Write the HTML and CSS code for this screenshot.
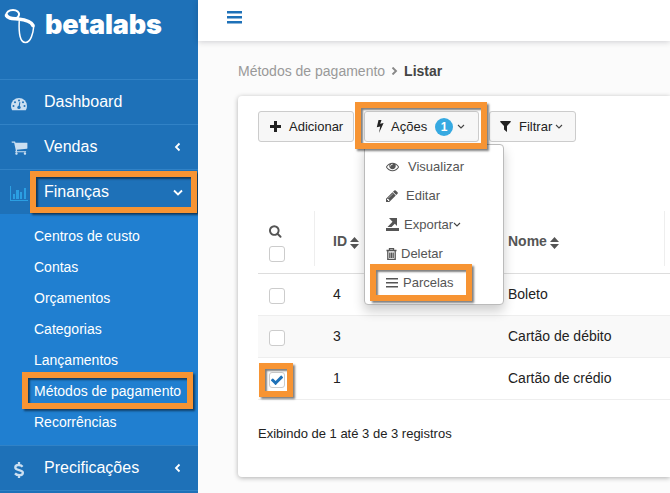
FILE: index.html
```html
<!DOCTYPE html>
<html lang="pt-BR">

<head>
    <meta charset="UTF-8">
    <meta name="viewport" content="width=device-width, initial-scale=1.0">
    <title>Métodos de pagamento</title>
    <link rel="stylesheet" href="styles.css">
</head>

<body>
    <aside class="sidebar">
        <div class="logo">
            <svg class="logo-icon" width="32" height="36" viewBox="0 0 32 36" fill="none" stroke="#fff" stroke-linecap="round">
                <path d="M2.200 8C2 4 5 2 9 2c4 0 6.500 2.500 6 5-.3 1.600-1.500 2.800-3 3.500" stroke-width="2" />
                <path d="M2.500 7.500C4 11 9 10.500 14 11c7 .8 13.500 2.500 15 6.500" stroke-width="3.600" />
                <path d="M29.800 18c-.6 7-3 16.500-8.300 16.500-5.500 0-6.800-9-6.300-21" stroke-width="1.500" />
            </svg>
            <span class="logo-text">betalabs</span>
        </div>

        <ul class="menu">
            <li class="menu-item">
                <svg class="menu-icon" width="18" height="18" viewBox="0 0 18 18">
                    <path fill="currentColor" d="M1 11a8 8 0 0 1 16 0c0 1.600-.4 3-1.200 4.200H2.200C1.400 14 1 12.600 1 11z" />
                    <g fill="#1e71b8">
                        <circle cx="3.500" cy="11" r="1" />
                        <circle cx="5" cy="7.300" r="1" />
                        <circle cx="9" cy="5.500" r="1" />
                        <circle cx="13" cy="7.300" r="1" />
                        <circle cx="14.500" cy="11" r="1" />
                        <circle cx="9" cy="12.400" r="1.700" />
                        <path d="M8.400 12l1-5 1 .3-.8 5z" />
                    </g>
                </svg>
                <span>Dashboard</span>
            </li>
            <li class="menu-item">
                <svg class="menu-icon cart" width="17" height="17" viewBox="0 0 1792 1792" fill="currentColor">
                    <path d="M704 1536q0 52-38 90t-90 38-90-38-38-90 38-90 90-38 90 38 38 90zm896 0q0 52-38 90t-90 38-90-38-38-90 38-90 90-38 90 38 38 90zm128-1088v512q0 24-16.500 42.500t-40.500 21.500l-1044 122q13 60 13 70 0 16-24 64h920q26 0 45 19t19 45-19 45-45 19h-1024q-26 0-45-19t-19-45q0-11 8-31.500t16-36 21.500-40 15.500-29.500l-177-823h-204q-26 0-45-19t-19-45 19-45 45-19h256q16 0 28.500 6.500t19.500 15.500 13 24.500 8 26 5.500 29.500 4.500 26h1201q26 0 45 19t19 45z" />
                </svg>
                <span>Vendas</span>
                <svg class="arrow" width="10" height="10" viewBox="0 0 10 10"><path d="M6.500 1.500L3 5l3.500 3.500" /></svg>
            </li>
            <li class="menu-item active">
                <svg class="menu-icon chart" width="19" height="16" viewBox="0 0 19 16" fill="currentColor">
                    <path d="M0 0h1v14h17v1H0zM3 8h2v5H3zM6 4h3v9H6zM10 6h2v7h-2zM14 2h2v11h-2z" />
                </svg>
                <span>Finanças</span>
                <svg class="arrow" width="10" height="10" viewBox="0 0 10 10"><path d="M1 3.500l4 4 4-4" /></svg>
                <div class="mark mark-financas"></div>
            </li>
        </ul>

        <ul class="submenu">
            <li>Centros de custo</li>
            <li>Contas</li>
            <li>Orçamentos</li>
            <li>Categorias</li>
            <li>Lançamentos</li>
            <li>Métodos de pagamento<div class="mark mark-metodos"></div></li>
            <li>Recorrências</li>
        </ul>

        <ul class="menu">
            <li class="menu-item">
                <svg class="menu-icon" width="18" height="18" viewBox="0 0 18 18" fill="none" stroke="currentColor" stroke-width="2.300">
                    <path d="M12.600 5.700C11.500 4.500 10 4 8.600 4 6.700 4 5.300 5 5.300 6.500c0 3.400 7.600 1.700 7.600 5.200 0 1.600-1.500 2.500-3.700 2.500-1.700 0-3.100-.6-4.200-1.800M9 1v3M9 14v3" />
                </svg>
                <span>Precificações</span>
                <svg class="arrow" width="10" height="10" viewBox="0 0 10 10"><path d="M6.500 1.500L3 5l3.500 3.500" /></svg>
            </li>
            <li class="menu-item"></li>
        </ul>
    </aside>

    <div class="content">
        <header class="topbar">
            <svg width="15" height="13" viewBox="0 0 15 13" fill="#1e71b8">
                <path d="M0 0h15v2.500H0zM0 5h15v2.500H0zM0 10h15v2.500H0z" />
            </svg>
        </header>

        <div class="breadcrumb">
            <span>Métodos de pagamento</span>
            <svg width="7" height="8" viewBox="0 0 7 8" fill="none" stroke="#888" stroke-width="1.900"><path d="M1.500 .5L5 4 1.500 7.500" /></svg>
            <b>Listar</b>
        </div>

        <main class="card">
            <div class="toolbar">
                <button class="btn btn-add">
                    <svg width="11" height="11" viewBox="0 0 11 11" fill="#222"><path d="M4 0h3v4h4v3H7v4H4V7H0V4h4z" /></svg>
                    <span>Adicionar</span>
                </button>

                <div class="dropdown">
                    <button class="btn btn-actions">
                        <svg width="8" height="13" viewBox="0 0 8 13" fill="#222"><path d="M2.500 0h3L4.200 3.700 7.600 3 3 13l1.200-6.500L.8 7.300z" /></svg>
                        <span>Ações</span>
                        <span class="badge">1</span>
                        <svg class="caret" width="8" height="6" viewBox="0 0 8 6"><path d="M1 1l3 3 3-3" /></svg>
                    </button>
                    <div class="mark mark-acoes"></div>

                    <ul class="dropdown-menu">
                        <li class="view">
                            <svg width="13" height="13" viewBox="0 0 1792 1792" fill="currentColor"><path d="M1664 960q-152-236-381-353 61 104 61 225 0 185-131.500 316.500t-316.500 131.500-316.500-131.500-131.500-316.500q0-121 61-225-229 117-381 353 133 205 333.500 326.500t434.500 121.500 434.500-121.500 333.500-326.500zm-720-384q0-20-14-34t-34-14q-125 0-214.500 89.500t-89.500 214.500q0 20 14 34t34 14 34-14 14-34q0-86 61-147t147-61q20 0 34-14t14-34zm848 384q0 34-20 69-140 230-376.500 368.500t-499.500 138.500-499.500-139-376.500-368q-20-35-20-69t20-69q140-229 376.500-368t499.500-139 499.500 139 376.500 368q20 35 20 69z" /></svg>
                            <span>Visualizar</span>
                        </li>
                        <li class="edit">
                            <svg width="12" height="12" viewBox="128 128 1536 1536" fill="currentColor"><path d="M491 1536l91-91-235-235-91 91v107h128v128h107zm523-928q0-22-22-22-10 0-17 7l-542 542q-7 7-7 17 0 22 22 22 10 0 17-7l542-542q7-7 7-17zm-54-192l416 416-832 832h-416v-416zm683 96q0 53-37 90l-166 166-416-416 166-165q36-38 90-38 53 0 91 38l235 234q37 39 37 91z" /></svg>
                            <span>Editar</span>
                        </li>
                        <li class="export">
                            <svg width="13" height="13" viewBox="0 0 13 13" fill="currentColor"><path d="M0 10h13v3H0zM3 0h8v8L8.800 5.800 5.500 9h-4l5-5.200z" /></svg>
                            <span>Exportar</span>
                            <svg class="caret" width="8" height="6" viewBox="0 0 8 6"><path d="M1 1l3 3 3-3" /></svg>
                        </li>
                        <li class="delete">
                            <svg width="11" height="12" viewBox="0 0 11 12" fill="none" stroke="currentColor"><path d="M.5 2.500h10M3.500 2V.6h4V2M1.800 3v8.400h7.400V3M3.800 4.500V10M5.500 4.500V10M7.200 4.500V10" stroke-width="1.300" /></svg>
                            <span>Deletar</span>
                        </li>
                        <li class="installments">
                            <svg width="12" height="11" viewBox="0 0 12 11" fill="currentColor"><path d="M0 1h12v1.500H0zM0 5h12v1.500H0zM0 9h12v1.500H0z" /></svg>
                            <span>Parcelas</span>
                            <div class="mark mark-parcelas"></div>
                        </li>
                    </ul>
                </div>

                <button class="btn btn-filter">
                    <svg width="11" height="11" viewBox="0 0 11 11" fill="#222"><path d="M.3 0h10.400v1L7 5v6L4 8.500V5L.3 1z" /></svg>
                    <span>Filtrar</span>
                    <svg class="caret" width="8" height="6" viewBox="0 0 8 6"><path d="M1 1l3 3 3-3" /></svg>
                </button>
            </div>

            <div class="table">
                <div class="row head">
                    <div class="cell select">
                        <svg width="13" height="13" viewBox="64 128 1728 1664" fill="currentColor"><path d="M1216 832q0-185-131.500-316.500t-316.500-131.500-316.500 131.500-131.500 316.500 131.500 316.500 316.500 131.500 316.500-131.500 131.500-316.500zm512 832q0 52-38 90t-90 38q-54 0-90-38l-343-342q-179 124-399 124-143 0-273.500-55.500t-225-150-150-225-55.500-273.500 55.500-273.500 150-225 225-150 273.500-55.500 273.500 55.500 225 150 150 225 55.500 273.500q0 220-124 399l343 343q37 37 37 90z" /></svg>
                        <span class="checkbox"></span>
                    </div>
                    <div class="cell">
                        <span>ID</span>
                        <svg class="sort" width="9" height="12" viewBox="0 0 9 12"><path d="M0 5l4.500-5L9 5zM0 7h9l-4.500 5z" /></svg>
                    </div>
                    <div class="cell">
                        <span>Nome</span>
                        <svg class="sort" width="9" height="12" viewBox="0 0 9 12"><path d="M0 5l4.500-5L9 5zM0 7h9l-4.500 5z" /></svg>
                    </div>
                </div>
                <div class="row">
                    <div class="cell select"><span class="checkbox"></span></div>
                    <div class="cell">4</div>
                    <div class="cell">Boleto</div>
                </div>
                <div class="row odd">
                    <div class="cell select"><span class="checkbox"></span></div>
                    <div class="cell">3</div>
                    <div class="cell">Cartão de débito</div>
                </div>
                <div class="row">
                    <div class="cell select">
                        <span class="checkbox">
                            <svg width="14" height="14" viewBox="0 0 1792 1792" fill="#1e71b8"><path d="M1671 566q0 40-28 68l-724 724-136 136q-28 28-68 28t-68-28l-136-136-362-362q-28-28-28-68t28-68l136-136q28-28 68-28t68 28l294 295 656-657q28-28 68-28t68 28l136 136q28 28 28 68z" /></svg>
                        </span>
                        <div class="mark mark-check"></div>
                    </div>
                    <div class="cell">1</div>
                    <div class="cell">Cartão de crédio</div>
                </div>
            </div>

            <p class="info">Exibindo de 1 até 3 de 3 registros</p>
        </main>
    </div>
</body>

</html>
```
FILE: styles.css
```css
* {
    box-sizing: border-box;
}

body {
    margin: 0;
    height: 493px;
    display: flex;
    overflow: hidden;
    font-family: "Liberation Sans", Arial, sans-serif;
    font-size: 14px;
    color: #222;
    background-color: #fbfbfb;
}

ul {
    list-style: none;
    margin: 0;
    padding: 0;
}

svg {
    display: block;
    flex-shrink: 0;
}

/* sidebar */
.sidebar {
    width: 198px;
    height: 493px;
    flex-shrink: 0;
    overflow: hidden;
    background-color: #1e71b8;
    color: white;
}

.logo {
    height: 79px;
    display: flex;
    align-items: flex-start;
    padding: 8px 0 0 4px;
}

.logo-text {
    margin-left: 9px;
    font-family: Inter, sans-serif;
    font-size: 27px;
    font-weight: 900;
    line-height: 33px;
    letter-spacing: -0.2px;
}

.menu-item {
    position: relative;
    height: 45px;
    display: flex;
    align-items: center;
    padding: 0 15px 0 10px;
    border-top: 1px solid #3182c6;
    font-size: 16px;
    line-height: 18px;
}

.menu-item span {
    flex: 1;
    margin-top: -1px;
}

.menu-icon {
    margin: 3px 16px 0 0;
    color: #cbdff1;
}

.cart {
    margin: 1px 16px 0 1px;
}

.chart {
    margin-right: 15px;
    color: #2b9fe2;
}

.arrow {
    fill: none;
    stroke: white;
    stroke-width: 1.8;
}

.submenu {
    height: 231px;
    padding: 7px 0 7px 34px;
    background-color: #207fd0;
}

.submenu li {
    position: relative;
    line-height: 31px;
    white-space: nowrap;
}

/* top */
.content {
    flex: 1;
    min-width: 0;
}

.topbar {
    height: 41px;
    padding: 11px 0 0 29px;
    background-color: white;
    box-shadow: 0 1px 6px rgba(0, 0, 30, 0.18);
}

.breadcrumb {
    height: 55px;
    display: flex;
    align-items: center;
    gap: 6px;
    padding: 5px 0 0 40px;
    color: #999;
}

.breadcrumb b {
    color: #444;
}

.card {
    height: 381px;
    margin-left: 40px;
    padding: 15px 0 0 20px;
    background-color: white;
    border-radius: 4px 0 0 4px;
    box-shadow: 0 1px 5px rgba(0, 0, 0, 0.3);
}

.toolbar {
    display: flex;
    gap: 10px;
}

.btn {
    height: 31px;
    display: flex;
    align-items: center;
    padding: 0 11px;
    border: 1px solid #ccc;
    border-radius: 3px;
    background-color: #f7f7f7;
    font-family: inherit;
    font-size: 13px;
    color: #222;
}

.btn-add {
    width: 96px;
    gap: 8px;
}

.btn-actions {
    width: 115px;
}

.btn-actions .badge {
    margin: 0 4px 0 8px;
}

.btn-actions svg:first-child {
    margin-right: 7px;
}

.btn-filter {
    width: 87px;
    padding: 0 10px;
}

.btn-filter svg:first-child {
    margin-right: 8px;
}

.btn-filter .caret {
    margin-left: 3px;
}

.badge {
    width: 18px;
    height: 18px;
    border-radius: 50%;
    background-color: #36a9e1;
    color: white;
    font-size: 12px;
    font-weight: bold;
    line-height: 18px;
    text-align: center;
}

.caret {
    fill: none;
    stroke: #444;
    stroke-width: 1.1;
}

/* actions menu */
.dropdown {
    position: relative;
}

.dropdown-menu {
    position: absolute;
    top: 33px;
    left: 0;
    z-index: 2;
    width: 140px;
    padding: 7px 0;
    border: 1px solid #bbb;
    border-radius: 4px;
    background-color: white;
    box-shadow: 0 6px 12px rgba(0, 0, 0, 0.2);
    font-size: 13px;
    color: #555;
}

.dropdown-menu li {
    position: relative;
    height: 29px;
    display: flex;
    align-items: center;
    gap: 5px;
    padding-left: 21px;
}

.dropdown-menu .view {
    gap: 9px;
}

.dropdown-menu .edit {
    gap: 8px;
}

.dropdown-menu .export .caret {
    margin-left: -5px;
}

.dropdown-menu .delete {
    gap: 4px;
}

/* table */
.row {
    height: 42px;
    display: grid;
    grid-template-columns: 57px 175px 175px;
    align-items: center;
    border-bottom: 1px solid #eee;
}

.row.odd {
    background-color: #f9f9f9;
}

.cell {
    position: relative;
    padding: 0 0 2px 18px;
}

.cell.select {
    padding: 0 0 0 11px;
}

.row.head {
    height: 63px;
    margin-top: 69px;
    align-items: start;
    border-bottom-color: #ddd;
    font-weight: bold;
    color: #555;
}

.head .cell {
    height: 55px;
    display: flex;
    align-items: center;
    gap: 3px;
    padding-top: 5px;
    padding-bottom: 0;
    border-right: 1px solid #eee;
}

.head .cell.select {
    flex-direction: column;
    align-items: flex-start;
    gap: 8px;
    padding-top: 14px;
}

.sort {
    margin-top: 3px;
    fill: #555;
}

.checkbox {
    width: 16px;
    height: 16px;
    flex-shrink: 0;
    display: block;
    border: 1px solid #ccc;
    border-radius: 3px;
    background-color: white;
}

.row:not(.head) .checkbox {
    margin-top: 3px;
}

.info {
    margin: 26px 0 0;
    font-size: 13px;
    line-height: 16px;
}

/* orange markers drawn over the highlighted items */
.mark {
    position: absolute;
    z-index: 3;
    border: 6px solid #f79433;
    box-shadow: 2px 2px 2px rgba(0, 0, 0, 0.5), inset 2px 2px 2px rgba(0, 0, 0, 0.5);
    pointer-events: none;
}

.mark-financas {
    top: 1px;
    left: 30px;
    width: 167px;
    height: 42px;
}

.mark-metodos {
    top: -4px;
    left: -12px;
    width: 171px;
    height: 37px;
}

.mark-acoes {
    top: -9px;
    left: -9px;
    width: 132px;
    height: 47px;
}

.mark-parcelas {
    top: -4px;
    left: 5px;
    width: 102px;
    height: 37px;
}

.mark-check {
    top: -6px;
    left: 1px;
    width: 34px;
    height: 34px;
}
```
